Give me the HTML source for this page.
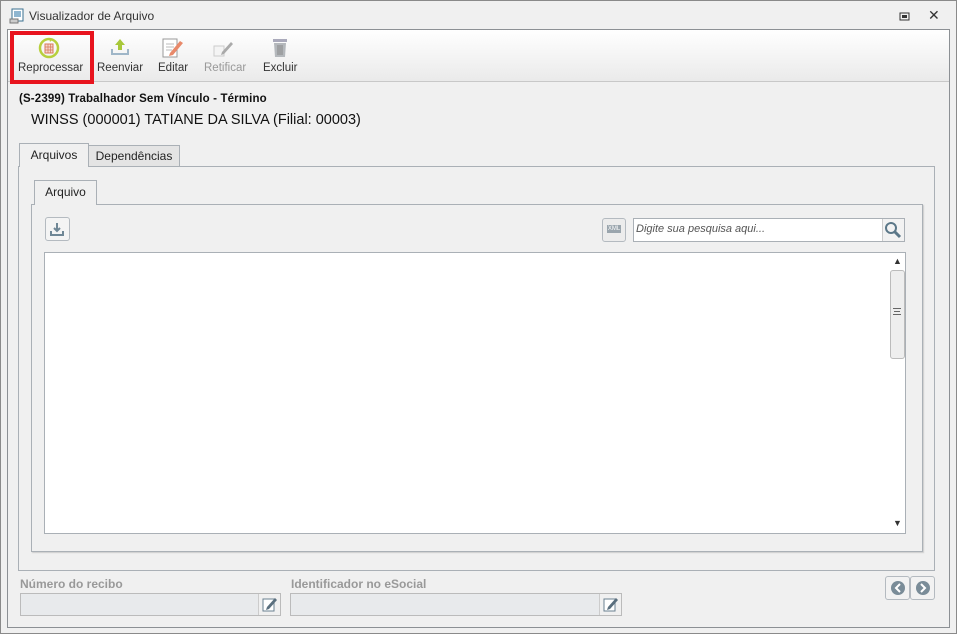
<!DOCTYPE html>
<html><head><style>
*{margin:0;padding:0;box-sizing:border-box}
body{width:957px;height:634px;background:#f0f0f0;font-family:"Liberation Sans",sans-serif;font-size:12px;color:#222;position:relative;overflow:hidden}
.a{position:absolute}
.win{left:0;top:0;width:957px;height:634px;border:1px solid #8a8a8a;background:#f0f0f0}
.inner{left:7px;top:29px;width:943px;height:599px;border:1px solid #8c9094;background:#f0f0f0}
.tb{left:8px;top:30px;width:941px;height:52px;background:linear-gradient(#fff,#eaeaea);border-bottom:1px solid #c8c8c8}
.btn{top:62px;font-size:11.5px;color:#333}
.tab{background:#e4e4e4;border:1px solid #aab0b6;border-bottom:none;text-align:center;line-height:22px;font-size:12px}
.panel{border:1px solid #aab0b6;background:#f0f0f0}
</style></head><body>
<div class="a win"></div>
<svg class="a" style="left:9px;top:8px" width="16" height="16"><rect x="3" y="1" width="11" height="12" fill="#fff" stroke="#3a6f8f"/><rect x="5" y="3" width="7" height="6" fill="#8fb6d0"/><rect x="1" y="11" width="8" height="4" fill="#ccc" stroke="#777"/></svg>
<div class="a" style="left:29px;top:9px;font-size:12px;color:#333">Visualizador de Arquivo</div>
<svg class="a" style="left:899px;top:12px" width="12" height="10"><rect x="1" y="1" width="9" height="7" fill="none" stroke="#333"/><rect x="3" y="3" width="5" height="3" fill="#333"/></svg>
<div class="a" style="left:928px;top:7px;font-size:14px;color:#333">✕</div>
<div class="a inner"></div>
<div class="a tb"></div>
<div class="a" style="left:10px;top:31px;width:84px;height:53px;border:4px solid #e8141e"></div>
<svg class="a" style="left:37px;top:36px" width="24" height="24"><circle cx="12" cy="12" r="9" fill="none" stroke="#b7cf3c" stroke-width="2.5"/><path d="M12 2 l4 1 -3 3z" fill="#b7cf3c"/><rect x="8" y="8" width="8" height="9" fill="#f3d6cc" stroke="#d97a5a"/><path d="M8 11h8M8 14h8M11 8v9M13.5 8v9" stroke="#d97a5a" stroke-width=".7"/></svg>
<div class="a btn" style="left:18px">Reprocessar</div>
<svg class="a" style="left:109px;top:37px" width="22" height="20"><path d="M11 2l5 6h-3v5h-4v-5h-3z" fill="#a8c83a"/><path d="M3 12v5h16v-5" fill="none" stroke="#9fb6c8" stroke-width="2"/></svg>
<div class="a btn" style="left:97px">Reenviar</div>
<svg class="a" style="left:161px;top:36px" width="24" height="24"><rect x="2" y="3" width="14" height="18" fill="#fff" stroke="#999"/><path d="M5 8h8M5 11h8M5 14h6" stroke="#bbb"/><path d="M9 17l10-12 3 2-10 12-4 1z" fill="#e8896a"/></svg>
<div class="a btn" style="left:158px">Editar</div>
<svg class="a" style="left:212px;top:38px" width="24" height="20"><path d="M2 8h10v10H2z" fill="#f4f4f4" stroke="#ccc"/><path d="M10 14l9-10 2 2-9 10-3 1z" fill="#aaa"/></svg>
<div class="a btn" style="left:204px;color:#999">Retificar</div>
<svg class="a" style="left:270px;top:37px" width="20" height="22"><rect x="3" y="2" width="14" height="3" fill="#aab"/><path d="M4 6h12l-1 14H5z" fill="#b4b8bc"/><path d="M8 8v10M10 8v10M12 8v10" stroke="#888"/></svg>
<div class="a btn" style="left:263px">Excluir</div>
<div class="a" style="left:19px;top:93px;font-weight:bold;font-size:11.5px;color:#111;letter-spacing:.15px">(S-2399) Trabalhador Sem Vínculo - Término</div>
<div class="a" style="left:31px;top:112px;font-size:14.5px;color:#111">WINSS (000001) TATIANE DA SILVA (Filial: 00003)</div>
<div class="a panel" style="left:18px;top:166px;width:917px;height:405px"></div>
<div class="a tab" style="left:19px;top:143px;width:70px;height:24px;background:#f0f0f0">Arquivos</div>
<div class="a tab" style="left:88px;top:145px;width:92px;height:21px;line-height:21px">Dependências</div>
<div class="a panel" style="left:31px;top:204px;width:892px;height:348px;box-shadow:1px 1px 1px #ccc"></div>
<div class="a tab" style="left:34px;top:180px;width:63px;height:25px;background:#f0f0f0">Arquivo</div>
<div class="a" style="left:45px;top:217px;width:25px;height:24px;border:1px solid #b4bac0;border-radius:3px;background:#f4f4f4"></div>
<svg class="a" style="left:49px;top:221px" width="16" height="16"><path d="M8 2v8M5 7l3 3 3-3" stroke="#6f8796" stroke-width="2" fill="none"/><path d="M2 10v4h12v-4" stroke="#6f8796" stroke-width="2" fill="none"/></svg>
<div class="a" style="left:602px;top:218px;width:24px;height:24px;border:1px solid #b4bac0;border-radius:3px;background:#ececec"></div>
<div class="a" style="left:607px;top:225px;width:14px;height:8px;background:#9aa5ad;color:#fff;font-size:6px;line-height:8px;text-align:center">XML</div>
<div class="a" style="left:633px;top:218px;width:272px;height:24px;border:1px solid #aab0b6;background:#fff"></div>
<div class="a" style="left:636px;top:223px;font-style:italic;font-size:11px;color:#555">Digite sua pesquisa aqui...</div>
<div class="a" style="left:882px;top:219px;width:22px;height:22px;border-left:1px solid #ccc;background:#f2f2f2"></div>
<svg class="a" style="left:884px;top:221px" width="18" height="18"><circle cx="7" cy="7" r="5" fill="none" stroke="#5b7788" stroke-width="2"/><path d="M11 11l5 5" stroke="#5b7788" stroke-width="3"/></svg>
<div class="a" style="left:44px;top:252px;width:862px;height:282px;border:1px solid #aab0b6;background:#fff"></div>
<div class="a" style="left:893px;top:256px;font-size:9px;color:#333">▲</div>
<div class="a" style="left:890px;top:270px;width:15px;height:89px;border:1px solid #bbb;border-radius:3px;background:#eee"></div>
<div class="a" style="left:893px;top:308px;width:8px;height:7px;border-top:1px solid #666;border-bottom:1px solid #666"></div>
<div class="a" style="left:894px;top:311px;width:6px;height:1px;background:#666"></div>
<div class="a" style="left:893px;top:518px;font-size:9px;color:#333">▼</div>
<div class="a" style="left:20px;top:577px;font-weight:bold;font-size:12px;color:#999">Número do recibo</div>
<div class="a" style="left:291px;top:577px;font-weight:bold;font-size:12px;color:#999">Identificador no eSocial</div>
<div class="a" style="left:20px;top:593px;width:261px;height:23px;border:1px solid #bbb;background:#e8eaec"></div>
<div class="a" style="left:290px;top:593px;width:332px;height:23px;border:1px solid #bbb;background:#e8eaec"></div>
<div class="a" style="left:258px;top:594px;width:22px;height:21px;border-left:1px solid #ccc;background:#f0f0f0"></div>
<div class="a" style="left:599px;top:594px;width:22px;height:21px;border-left:1px solid #ccc;background:#f0f0f0"></div>
<svg class="a" style="left:262px;top:596px" width="16" height="16"><rect x="1" y="3" width="11" height="12" fill="#fff" stroke="#6a8090"/><path d="M5 11l8-9 2 2-8 9-3 1z" fill="#5a6f7e"/></svg>
<svg class="a" style="left:603px;top:596px" width="16" height="16"><rect x="1" y="3" width="11" height="12" fill="#fff" stroke="#6a8090"/><path d="M5 11l8-9 2 2-8 9-3 1z" fill="#5a6f7e"/></svg>
<div class="a" style="left:885px;top:576px;width:25px;height:24px;border:1px solid #b4bac0;border-radius:3px;background:#f2f2f2"></div>
<div class="a" style="left:910px;top:576px;width:25px;height:24px;border:1px solid #b4bac0;border-radius:3px;background:#f2f2f2"></div>
<svg class="a" style="left:890px;top:580px" width="16" height="16"><circle cx="8" cy="8" r="7" fill="#7a8c98"/><path d="M10 4L6 8l4 4" stroke="#fff" stroke-width="2" fill="none"/></svg>
<svg class="a" style="left:915px;top:580px" width="16" height="16"><circle cx="8" cy="8" r="7" fill="#7a8c98"/><path d="M6 4l4 4-4 4" stroke="#fff" stroke-width="2" fill="none"/></svg>
</body></html>
